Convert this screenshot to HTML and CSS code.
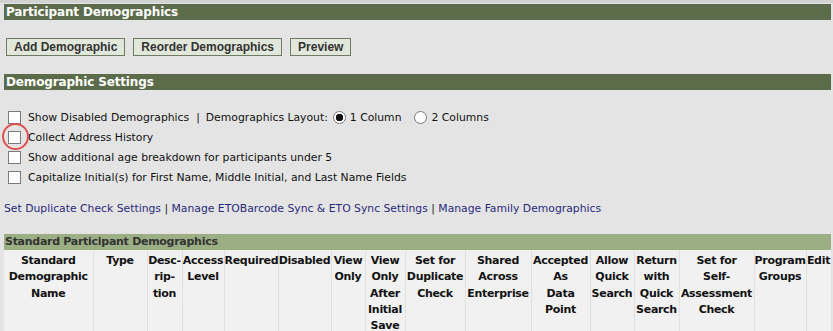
FILE: index.html
```html
<!DOCTYPE html>
<html lang="en">
  <head>
    <meta charset="UTF-8" />
    <title>Participant Demographics</title>
    <link rel="stylesheet" href="styles.css">
  </head>
  <body>
    <h2 class="bar">Participant Demographics</h2>
    <div class="buttons">
      <button type="button">Add Demographic</button>
      <button type="button">Reorder Demographics</button>
      <button type="button">Preview</button>
    </div>

    <h2 class="bar">Demographic Settings</h2>
    <div class="settings">
      <div class="row">
        <input type="checkbox" id="showDisabled" />
        <label for="showDisabled">Show Disabled Demographics</label>
        <span class="sep">|</span>
        <span>Demographics Layout:</span>
        <input type="radio" name="layout" id="oneCol" checked />
        <label for="oneCol">1 Column</label>
        <input type="radio" name="layout" id="twoCol" class="second" />
        <label for="twoCol">2 Columns</label>
      </div>
      <div class="row marked">
        <input type="checkbox" id="addrHistory" />
        <label for="addrHistory">Collect Address History</label>
        <span class="ring"></span>
      </div>
      <div class="row">
        <input type="checkbox" id="ageBreakdown" />
        <label for="ageBreakdown">Show additional age breakdown for participants under 5</label>
      </div>
      <div class="row">
        <input type="checkbox" id="capitalize" />
        <label for="capitalize">Capitalize Initial(s) for First Name, Middle Initial, and Last Name Fields</label>
      </div>
    </div>

    <div class="links">
      <a href="#">Set Duplicate Check Settings</a> |
      <a href="#">Manage ETOBarcode Sync &amp; ETO Sync Settings</a> |
      <a href="#">Manage Family Demographics</a>
    </div>

    <h3 class="subbar">Standard Participant Demographics</h3>
    <table class="demo-table">
      <colgroup>
        <col style="width:89px" />
        <col style="width:54px" />
        <col style="width:35px" />
        <col style="width:42px" />
        <col style="width:54px" />
        <col style="width:53px" />
        <col style="width:34px" />
        <col style="width:40px" />
        <col style="width:60px" />
        <col style="width:66px" />
        <col style="width:59px" />
        <col style="width:44px" />
        <col style="width:45px" />
        <col style="width:75px" />
        <col style="width:52px" />
        <col style="width:25px" />
      </colgroup>
      <thead>
        <tr>
          <th>Standard<br />Demographic<br />Name</th>
          <th>Type</th>
          <th>Desc-<br />rip-<br />tion</th>
          <th>Access<br />Level</th>
          <th>Required</th>
          <th>Disabled</th>
          <th>View<br />Only</th>
          <th>View<br />Only<br />After<br />Initial<br />Save</th>
          <th>Set for<br />Duplicate<br />Check</th>
          <th>Shared<br />Across<br />Enterprise</th>
          <th>Accepted<br />As<br />Data<br />Point</th>
          <th>Allow<br />Quick<br />Search</th>
          <th>Return<br />with<br />Quick<br />Search</th>
          <th>Set for<br />Self-<br />Assessment<br />Check</th>
          <th>Program<br />Groups</th>
          <th>Edit</th>
        </tr>
      </thead>
    </table>
  </body>
</html>
```

FILE: styles.css
```css
body {
  margin: 0;
  padding: 1px 2px 0 4px;
  border-top: 3px solid #d2d2d2;
  background: #e4e4e4;
  font-family: "DejaVu Sans", Verdana, sans-serif;
  font-size: 10.8px;
  color: #111;
  overflow: hidden;
}

h2.bar {
  margin: 0;
  height: 16px;
  line-height: 16px;
  padding-left: 2px;
  background: #5c6b4a;
  color: #fff;
  font-size: 12px;
  font-weight: bold;
  letter-spacing: -0.15px;
}

.buttons {
  display: flex;
  gap: 8px;
  margin: 18px 0 18px 2px;
}

.buttons button {
  height: 18px;
  margin: 0;
  padding: 0 7px;
  border: 1px solid #6f7c63;
  background: #e2e7dc;
  color: #333;
  font-family: "Liberation Sans", Arial, sans-serif;
  font-size: 12px;
  font-weight: bold;
}

.settings {
  margin-top: 17px;
}

.row {
  position: relative;
  display: flex;
  align-items: center;
  height: 20px;
  padding-left: 4px;
}

.row input[type="checkbox"] {
  appearance: none;
  width: 13px;
  height: 13px;
  margin: 0 7px 0 0;
  border: 1px solid #7a7a7a;
  background: #fff;
}

.row input[type="radio"] {
  appearance: none;
  width: 13px;
  height: 13px;
  margin: 0 4px 0 5px;
  border: 1px solid #7a7a7a;
  border-radius: 50%;
  background: #fff;
}

.row input[type="radio"]:checked {
  background: radial-gradient(circle, #111 0 3.5px, #fff 4px);
}

.row input.second {
  margin-left: 13px;
}

.sep {
  margin: 0 6px 0 7px;
}

.ring {
  position: absolute;
  left: -2px;
  top: -4px;
  width: 23px;
  height: 23px;
  border: 2px solid #e0504f;
  border-radius: 50%;
}

.links {
  margin-top: 14px;
  height: 16px;
  line-height: 16px;
  color: #222;
}

.links a {
  color: #2a2a7c;
  text-decoration: none;
}

h3.subbar {
  margin: 17px 0 0;
  height: 16px;
  line-height: 16px;
  padding-left: 1px;
  background: #9bae84;
  color: #333;
  font-size: 11px;
  font-weight: bold;
  letter-spacing: -0.28px;
}

.demo-table {
  width: 827px;
  table-layout: fixed;
  border-collapse: collapse;
}

.demo-table th {
  height: 90px;
  padding: 3px 0 0;
  vertical-align: top;
  background: #f1f1f1;
  border-right: 1px solid #e0e0e0;
  font-size: 11px;
  line-height: 16.3px;
  letter-spacing: -0.3px;
  color: #111;
  white-space: nowrap;
}
```
